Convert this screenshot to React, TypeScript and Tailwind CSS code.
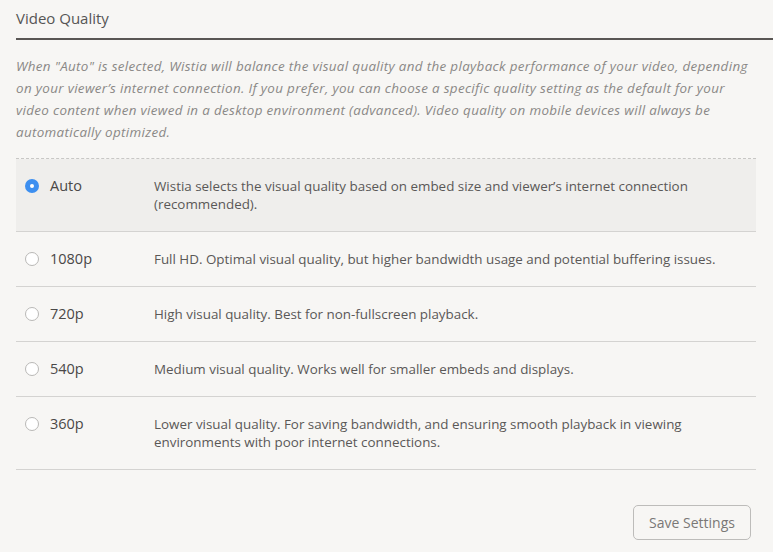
import React from "react";

const rows = [
  { label: "Auto", desc: <>Wistia selects the visual quality based on embed size and viewer’s internet connection<br />(recommended).</>, selected: true },
  { label: "1080p", desc: <>Full HD. Optimal visual quality, but higher bandwidth usage and potential buffering issues.</> },
  { label: "720p", desc: <>High visual quality. Best for non-fullscreen playback.</> },
  { label: "540p", desc: <>Medium visual quality. Works well for smaller embeds and displays.</> },
  { label: "360p", desc: <>Lower visual quality. For saving bandwidth, and ensuring smooth playback in viewing<br />environments with poor internet connections.</> },
];

function Radio({ selected }: { selected?: boolean }) {
  if (selected) {
    return (
      <span className="flex h-[14px] w-[14px] items-center justify-center rounded-full bg-[#3d8ff0]">
        <span className="h-[4px] w-[4px] rounded-full bg-white" />
      </span>
    );
  }
  return <span className="block h-[14px] w-[14px] rounded-full border border-[#b9b8b6] bg-white" />;
}

export default function App() {
  return (
    <div className="min-h-[552px] w-full bg-[#f7f6f4] pl-4 pt-[9px] text-[#555]" style={{ fontFamily: '"Open Sans", sans-serif' }}>
      <div className="text-[15px] leading-[18px] text-[#555]">Video Quality</div>
      <div className="mt-[11px] h-[2px] bg-[#595654]" />
      <div className="pr-[17px]">
        <p className="mt-[15px] whitespace-nowrap text-[13.4px] italic leading-[22px] tracking-[0.34px] text-[#8a8886]">
          When "Auto" is selected, Wistia will balance the visual quality and the playback performance of your video, depending
          <br />
          on your viewer’s internet connection. If you prefer, you can choose a specific quality setting as the default for your
          <br />
          video content when viewed in a desktop environment (advanced). Video quality on mobile devices will always be
          <br />
          automatically optimized.
        </p>
        <div className="mt-[15px] border-t border-dashed border-[#c8c7c5]">
          {rows.map((r) => (
            <div
              key={r.label}
              className={`flex items-start border-b border-[#d4d3d1] py-[18px] ${r.selected ? "bg-[#efeeec]" : ""}`}
            >
              <div className="flex w-[138px] shrink-0 items-center">
                <div className="ml-[9px] mr-[11px] flex h-[18px] items-center">
                  <Radio selected={r.selected} />
                </div>
                <span className="text-[14.5px] leading-[18px] text-[#4a4847]">{r.label}</span>
              </div>
              <div className="whitespace-nowrap text-[13.4px] leading-[18px] text-[#5a5857]">{r.desc}</div>
            </div>
          ))}
        </div>
        <div className="mt-[35px] flex justify-end pr-[5px]">
          <button className="h-[35px] w-[118px] rounded-[5px] border border-[#bdbcba] bg-[#f7f6f4] text-[14px] text-[#7a7876]">
            Save Settings
          </button>
        </div>
      </div>
    </div>
  );
}
